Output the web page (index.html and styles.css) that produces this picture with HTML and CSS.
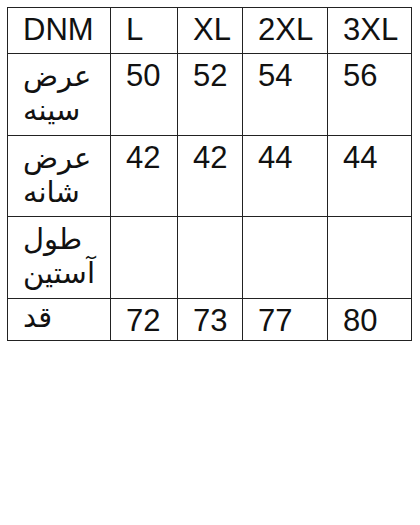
FILE: index.html
```html
<!DOCTYPE html>
<html lang="fa">
<head>
<meta charset="utf-8">
<link rel="stylesheet" href="styles.css">
</head>
<body>
<div class="page">
<table class="sizes" dir="ltr">
<colgroup>
<col class="c1"><col class="c2"><col class="c3"><col class="c4"><col class="c5">
</colgroup>
<tr class="r-head"><td>DNM</td><td>L</td><td>XL</td><td>2XL</td><td>3XL</td></tr>
<tr class="r-tall"><td class="label">عرض سینه</td><td>50</td><td>52</td><td>54</td><td>56</td></tr>
<tr class="r-tall2"><td class="label">عرض شانه</td><td>42</td><td>42</td><td>44</td><td>44</td></tr>
<tr class="r-tall"><td class="label">طول آستین</td><td></td><td></td><td></td><td></td></tr>
<tr class="r-last"><td class="label label-up">قد</td><td>72</td><td>73</td><td>77</td><td>80</td></tr>
</table>
</div>
</body>
</html>
```
FILE: styles.css
```css
html, body {
  margin: 0;
  padding: 0;
  background: #fff;
}
.page {
  padding: 7px 0 0 7px;
}
.sizes {
  border-collapse: collapse;
  table-layout: fixed;
  width: 404px;
  font-family: "Liberation Sans", "DejaVu Sans", sans-serif;
  font-size: 31px;
  color: #111;
}
.c1 { width: 103px; }
.c2 { width: 67px; }
.c3 { width: 65px; }
.c4 { width: 85px; }
.c5 { width: 84px; }
.sizes td {
  border: 1.5px solid #222;
  vertical-align: top;
  padding: 5px 12px 0 15px;
  text-align: left;
  line-height: 34px;
  overflow: hidden;
}
.label {
  font-family: "DejaVu Sans", sans-serif;
  font-size: 29px;
}
.sizes .label-up {
  padding-top: 1px;
}
.r-head td { height: 40px; }
.r-tall td { height: 76px; }
.r-tall2 td { height: 75px; }
.r-last td { height: 36px; }
.r-last .label-up { height: 40px; }
```
